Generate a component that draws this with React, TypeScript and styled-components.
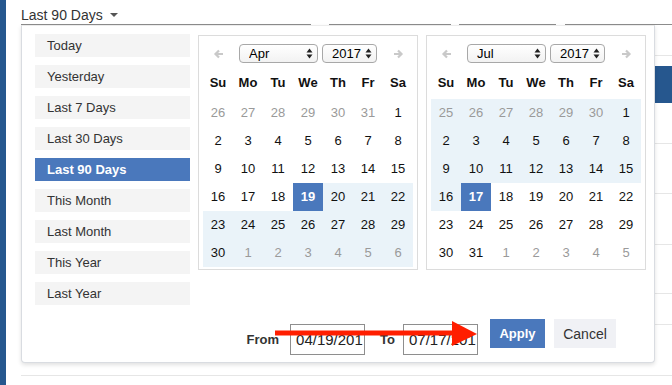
import React from "react";
import styled, { createGlobalStyle } from "styled-components";

const ACCENT = "#4a78bc";

const GlobalStyle = createGlobalStyle`
  html, body { margin: 0; padding: 0; background: #fff; }
  body { font-family: "Liberation Sans", Arial, Helvetica, sans-serif; color: #333; }
  * { box-sizing: border-box; }
`;

const Page = styled.div`
  position: relative;
  display: flex;
  width: 672px;
  height: 385px;
  overflow: hidden;
  background: #fff;
`;

const Sidebar = styled.div`
  width: 6px;
  flex-shrink: 0;
  background: #26578e;
`;

const Main = styled.div`
  flex: 1;
  margin-left: 15px;
  display: flex;
  flex-direction: column;
`;

const FilterBar = styled.div`
  display: flex;
  height: 25px;
  flex-shrink: 0;
`;

interface FilterFieldProps {
  $width: number;
  $gap: number;
}

const FilterField = styled.div<FilterFieldProps>`
  width: ${(p) => p.$width}px;
  margin-left: ${(p) => p.$gap}px;
  flex-shrink: 0;
  border-bottom: 1px solid #8c8c8c;
`;

const Trigger = styled.div`
  display: flex;
  align-items: center;
  padding-top: 7px;
  font-size: 14px;
  line-height: 16px;
  color: #333;

  svg {
    margin-left: 7px;
  }
`;

interface TableRowProps {
  $height: number;
  $border?: boolean;
  $active?: boolean;
}

const TableRow = styled.div<TableRowProps>`
  height: ${(p) => p.$height + (p.$border ? 1 : 0)}px;
  flex-shrink: 0;
  background: ${(p) => (p.$active ? "#26578e" : "transparent")};
  border-bottom: ${(p) => (p.$border ? "1px solid #e6e6e6" : "none")};
`;

const Popup = styled.div`
  position: absolute;
  top: 25px;
  left: 21px;
  width: 634px;
  padding: 8px 8px 7px 13px;
  background: #fff;
  border: 1px solid #d9dce1;
  border-top-color: #ececec;
  border-radius: 0 0 4px 4px;
  box-shadow: 0 2px 4px rgba(0, 0, 0, 0.12);
`;

const Body = styled.div`
  display: flex;
  align-items: flex-start;
  gap: 8px;
`;

const PresetList = styled.div`
  display: flex;
  flex-direction: column;
  gap: 8px;
  width: 155px;
  flex-shrink: 0;
`;

const Preset = styled.div<{ $active?: boolean }>`
  height: 23px;
  line-height: 23px;
  padding-left: 12px;
  font-size: 13px;
  color: ${(p) => (p.$active ? "#fff" : "#333")};
  font-weight: ${(p) => (p.$active ? 700 : 400)};
  background: ${(p) => (p.$active ? ACCENT : "#f4f4f4")};
`;

const Calendars = styled.div`
  display: flex;
  gap: 8px;
  margin-top: 1px;
`;

const Calendar = styled.div`
  width: 220px;
  padding: 8px 4px 2px;
  border: 1px solid #dcdcdc;
`;

const CalHeader = styled.div`
  display: flex;
  align-items: center;
  height: 19px;
  margin-bottom: 6px;
`;

const NavArrow = styled.div`
  width: 30px;
  display: flex;
  justify-content: center;
  align-items: center;
`;

const Selects = styled.div`
  flex: 1;
  display: flex;
  justify-content: center;
  gap: 4px;
`;

const SelectWrap = styled.div<{ $width: number }>`
  position: relative;
  width: ${(p) => p.$width}px;
  height: 19px;

  svg {
    position: absolute;
    right: 5px;
    top: 4px;
    pointer-events: none;
  }
`;

const Select = styled.select`
  appearance: none;
  -webkit-appearance: none;
  width: 100%;
  height: 100%;
  margin: 0;
  padding: 0 0 0 9px;
  border: 1px solid #a8a8a8;
  border-radius: 4px;
  background: linear-gradient(#ffffff, #f2f2f2);
  font-family: "Liberation Sans", Arial, sans-serif;
  font-size: 13px;
  line-height: 17px;
  color: #000;
  outline: none;
`;

const Grid = styled.div`
  display: grid;
  grid-template-columns: repeat(7, 30px);
`;

const WeekdayRow = styled(Grid)`
  margin-bottom: 2px;
`;

const Weekday = styled.div`
  height: 28px;
  line-height: 28px;
  text-align: center;
  font-size: 13px;
  font-weight: 700;
  color: #111;
`;

interface DayCellProps {
  $muted: boolean;
  $inRange: boolean;
  $selected: boolean;
}

const DayCell = styled.div<DayCellProps>`
  height: 28px;
  line-height: 28px;
  text-align: center;
  font-size: 13px;
  font-weight: ${(p) => (p.$selected ? 700 : 400)};
  color: ${(p) => (p.$selected ? "#fff" : p.$muted ? "#9a9a9a" : "#111")};
  background: ${(p) => (p.$selected ? ACCENT : p.$inRange ? "#eaf3f9" : "transparent")};
`;

const Footer = styled.div`
  display: flex;
  justify-content: flex-end;
  align-items: flex-start;
  margin-top: 14px;
  padding-right: 30px;
`;

const DateGroup = styled.div`
  display: flex;
  align-items: center;
  margin-top: 5px;
`;

const FieldLabel = styled.label<{ $before?: number; $after: number }>`
  margin-left: ${(p) => p.$before ?? 0}px;
  margin-right: ${(p) => p.$after}px;
  font-size: 13px;
  font-weight: 700;
  color: #333;
`;

const DateInput = styled.input`
  width: 75px;
  height: 31px;
  margin: 0;
  padding: 0 1px 0 5px;
  border: 1px solid #8e8e8e;
  border-radius: 0;
  font-family: "Liberation Sans", Arial, sans-serif;
  font-size: 15px;
  color: #222;
  background: #fff;
  outline: none;
`;

const Button = styled.button<{ $primary?: boolean }>`
  height: 29px;
  margin: 0 0 0 ${(p) => (p.$primary ? 12 : 9)}px;
  padding: 0;
  width: ${(p) => (p.$primary ? 55 : 62)}px;
  border: none;
  border-radius: 0;
  font-family: "Liberation Sans", Arial, sans-serif;
  font-size: ${(p) => (p.$primary ? 13 : 14)}px;
  font-weight: ${(p) => (p.$primary ? 700 : 400)};
  color: ${(p) => (p.$primary ? "#fff" : "#333")};
  background: ${(p) => (p.$primary ? ACCENT : "#f0f1f5")};
`;

const Annotation = styled.svg`
  position: absolute;
  left: 270px;
  top: 318px;
`;

const PRESETS = [
  "Today",
  "Yesterday",
  "Last 7 Days",
  "Last 30 Days",
  "Last 90 Days",
  "This Month",
  "Last Month",
  "This Year",
  "Last Year",
];

const WEEKDAYS = ["Su", "Mo", "Tu", "We", "Th", "Fr", "Sa"];
const MONTHS = ["Jan", "Feb", "Mar", "Apr", "May", "Jun", "Jul", "Aug", "Sep", "Oct", "Nov", "Dec"];

const RANGE_START = new Date(2017, 3, 19).getTime();
const RANGE_END = new Date(2017, 6, 17).getTime();

interface Day {
  label: number;
  muted: boolean;
  inRange: boolean;
  selected: boolean;
}

function buildWeeks(year: number, month: number): Day[] {
  const first = new Date(year, month, 1);
  const days: Day[] = [];
  for (let i = 0; i < 42; i++) {
    const date = new Date(year, month, 1 - first.getDay() + i);
    const t = date.getTime();
    days.push({
      label: date.getDate(),
      muted: date.getMonth() !== month,
      inRange: t >= RANGE_START && t <= RANGE_END,
      selected: t === RANGE_START || t === RANGE_END,
    });
  }
  return days;
}

const ArrowIcon = ({ flip }: { flip?: boolean }) => (
  <svg width="11" height="10" viewBox="0 0 11 10" style={flip ? { transform: "scaleX(-1)" } : undefined}>
    <path d="M10 5H2.5M6 1.5L2.5 5L6 8.5" fill="none" stroke="#c9c9c9" strokeWidth="2.2" />
  </svg>
);

const UpDownIcon = () => (
  <svg width="7" height="11" viewBox="0 0 7 11">
    <path d="M3.5 0.5L6.5 4.5H0.5Z M3.5 10.5L6.5 6.5H0.5Z" fill="#222" />
  </svg>
);

const CaretIcon = () => (
  <svg width="8" height="4" viewBox="0 0 8 4">
    <path d="M0 0H8L4 4Z" fill="#555" />
  </svg>
);

const MonthCalendar = ({ year, month }: { year: number; month: number }) => {
  const days = buildWeeks(year, month);
  return (
    <Calendar>
      <CalHeader>
        <NavArrow>
          <ArrowIcon />
        </NavArrow>
        <Selects>
          <SelectWrap $width={79}>
            <Select defaultValue={MONTHS[month]}>
              {MONTHS.map((m) => (
                <option key={m}>{m}</option>
              ))}
            </Select>
            <UpDownIcon />
          </SelectWrap>
          <SelectWrap $width={55}>
            <Select defaultValue={String(year)}>
              <option>2016</option>
              <option>2017</option>
              <option>2018</option>
            </Select>
            <UpDownIcon />
          </SelectWrap>
        </Selects>
        <NavArrow>
          <ArrowIcon flip />
        </NavArrow>
      </CalHeader>
      <WeekdayRow>
        {WEEKDAYS.map((d) => (
          <Weekday key={d}>{d}</Weekday>
        ))}
      </WeekdayRow>
      <Grid>
        {days.map((d, i) => (
          <DayCell key={i} $muted={d.muted} $inRange={d.inRange} $selected={d.selected}>
            {d.label}
          </DayCell>
        ))}
      </Grid>
    </Calendar>
  );
};

const ROWS: TableRowProps[] = [
  { $height: 30, $border: true },
  { $height: 10 },
  { $height: 37, $active: true },
  { $height: 40, $border: true },
  { $height: 49, $border: true },
  { $height: 50, $border: true },
  { $height: 48, $border: true },
  { $height: 30, $border: true },
  { $height: 50, $border: true },
];

export default function App() {
  return (
    <>
      <GlobalStyle />
      <Page>
        <Sidebar />
        <Main>
          <FilterBar>
            <FilterField $width={290} $gap={0}>
              <Trigger>
                Last 90 Days
                <CaretIcon />
              </Trigger>
            </FilterField>
            <FilterField $width={122} $gap={18} />
            <FilterField $width={97} $gap={8} />
            <FilterField $width={120} $gap={9} />
          </FilterBar>
          {ROWS.map((r, i) => (
            <TableRow key={i} {...r} />
          ))}
        </Main>

        <Popup>
          <Body>
            <PresetList>
              {PRESETS.map((p) => (
                <Preset key={p} $active={p === "Last 90 Days"}>
                  {p}
                </Preset>
              ))}
            </PresetList>
            <Calendars>
              <MonthCalendar year={2017} month={3} />
              <MonthCalendar year={2017} month={6} />
            </Calendars>
          </Body>
          <Footer>
            <DateGroup>
              <FieldLabel $after={11}>From</FieldLabel>
              <DateInput readOnly value="04/19/2017" />
              <FieldLabel $before={15} $after={8}>
                To
              </FieldLabel>
              <DateInput readOnly value="07/17/2017" />
            </DateGroup>
            <Button $primary>Apply</Button>
            <Button>Cancel</Button>
          </Footer>
        </Popup>

        <Annotation width="210" height="32" viewBox="0 0 210 32">
          <path d="M5 15H186" stroke="#ff1e00" strokeWidth="5" />
          <path d="M182 3L207 16L182 28Z" fill="#ff1e00" />
        </Annotation>
      </Page>
    </>
  );
}
